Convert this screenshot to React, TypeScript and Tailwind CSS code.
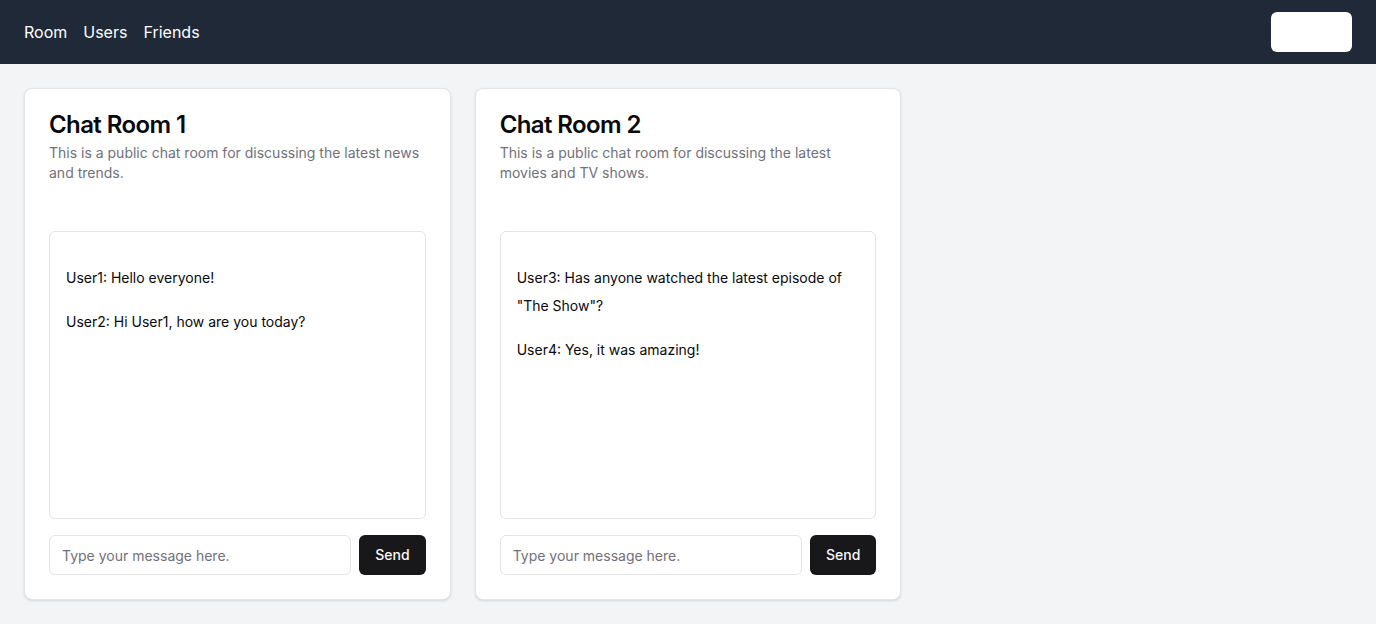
import React, { useState } from 'react';

type Room = {
  id: number;
  title: string;
  description: string;
  messages: string[];
};

const rooms: Room[] = [
  {
    id: 1,
    title: 'Chat Room 1',
    description: 'This is a public chat room for discussing the latest news and trends.',
    messages: ['User1: Hello everyone!', 'User2: Hi User1, how are you today?'],
  },
  {
    id: 2,
    title: 'Chat Room 2',
    description: 'This is a public chat room for discussing the latest movies and TV shows.',
    messages: ['User3: Has anyone watched the latest episode of "The Show"?', 'User4: Yes, it was amazing!'],
  },
];

function ChatRoomCard({ room }: { room: Room }) {
  const [draft, setDraft] = useState('');

  return (
    <div className="rounded-lg border border-[#e4e4e7] bg-white text-[#09090b] shadow-sm">
      <div className="flex flex-col gap-1.5 p-6">
        <h3 className="text-2xl leading-none font-semibold tracking-tight">{room.title}</h3>
        <p className="text-sm text-[#71717a]">{room.description}</p>
      </div>
      <div className="px-6 pt-6 pb-0">
        <div className="h-72 overflow-hidden rounded-md border border-[#e4e4e7] px-4 pt-8 pb-4">
          <div className="flex flex-col gap-4">
            {room.messages.map((m) => (
              <p key={m} className="text-sm leading-7 text-[#09090b]">
                {m}
              </p>
            ))}
          </div>
        </div>
      </div>
      <div className="flex items-center gap-2 p-6 pt-4">
        <input
          value={draft}
          onChange={(e) => setDraft(e.target.value)}
          placeholder="Type your message here."
          className="h-10 flex-1 min-w-0 rounded-md border border-[#e4e4e7] bg-white px-3 text-sm placeholder:text-[#71717a] outline-none"
        />
        <button className="h-10 rounded-md bg-[#18181b] px-4 text-sm font-medium text-[#fafafa]">Send</button>
      </div>
    </div>
  );
}

export default function App() {
  return (
    <div className="min-h-screen bg-[#f3f4f6] font-['Inter',sans-serif]">
      <header className="flex h-16 items-center justify-between bg-[#1f2937] px-6">
        <nav className="flex items-center gap-4 text-base text-white">
          <a href="#">Room</a>
          <a href="#">Users</a>
          <a href="#">Friends</a>
        </nav>
        <button className="h-10 w-[81px] rounded-md bg-white" />
      </header>
      <main className="grid grid-cols-3 gap-6 p-6">
        {rooms.map((room) => (
          <ChatRoomCard key={room.id} room={room} />
        ))}
      </main>
    </div>
  );
}
